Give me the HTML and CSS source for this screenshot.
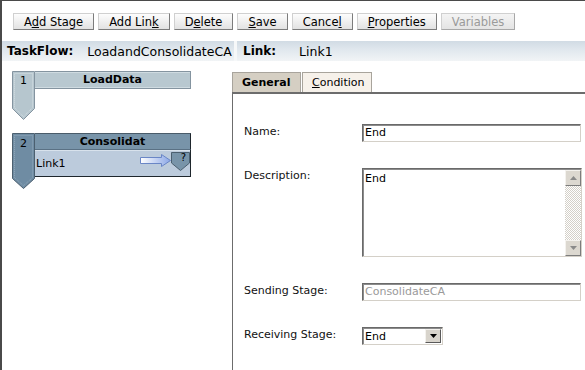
FILE: index.html
```html
<!DOCTYPE html>
<html>
<head>
<meta charset="utf-8">
<link rel="stylesheet" href="styles.css">
</head>
<body>
<div class="frame">
  <div class="toolbar">
    <button class="btn">A<u>d</u>d Stage</button>
    <button class="btn">Add Lin<u>k</u></button>
    <button class="btn">D<u>e</u>lete</button>
    <button class="btn"><u>S</u>ave</button>
    <button class="btn">Cance<u>l</u></button>
    <button class="btn"><u>P</u>roperties</button>
    <button class="btn" disabled>Variables</button>
  </div>

  <div class="infobar">
    <div class="info-cell info-left"><b>TaskFlow:</b><span class="info-val">LoadandConsolidateCA</span></div>
    <div class="info-sep"></div>
    <div class="info-cell info-right"><b>Link:</b><span class="info-val2">Link1</span></div>
  </div>

  <div class="main">
    <div class="canvas">
      <div class="stage stage-light">
        <svg class="stage-num" width="23" height="49" viewBox="0 0 23 49">
          <polygon points="0.5,0.5 22.5,0.5 22.5,37.5 11.5,48.5 0.5,37.5" fill="#b6c6ce" stroke="#8494a0"/>
          <polyline points="2.5,2.5 20.5,2.5 20.5,36.7 11.5,45.7 2.5,36.7 2.5,2.5" fill="none" stroke="#d6e0e5" stroke-dasharray="1 1"/>
          <text x="11.5" y="13" text-anchor="middle" class="num-text">1</text>
        </svg>
        <div class="stage-right">
          <div class="stage-title title-light">LoadData</div>
        </div>
      </div>

      <div class="stage stage-dark">
        <svg class="stage-num" width="23" height="56" viewBox="0 0 23 56">
          <polygon points="0.5,0.5 22.5,0.5 22.5,45.5 11.5,55.5 0.5,45.5" fill="#6f8ca3" stroke="#4b5f6f"/>
          <polyline points="2.5,2.5 20.5,2.5 20.5,44.6 11.5,52.6 2.5,44.6 2.5,2.5" fill="none" stroke="#93a9ba" stroke-dasharray="1 1"/>
          <text x="11.5" y="14" text-anchor="middle" class="num-text">2</text>
        </svg>
        <div class="stage-right">
          <div class="stage-title title-dark">Consolidat</div>
          <div class="stage-link">
            <span class="link-name">Link1</span>
            <svg class="link-arrow" width="31" height="13" viewBox="0 0 31 13">
              <defs>
                <linearGradient id="ag" x1="0" y1="0" x2="1" y2="0">
                  <stop offset="0" stop-color="#ffffff"/>
                  <stop offset="1" stop-color="#8ba7e6"/>
                </linearGradient>
              </defs>
              <polygon points="0.5,3.5 21.5,3.5 21.5,0.5 30.5,6.5 21.5,12.5 21.5,9.5 0.5,9.5" fill="url(#ag)" stroke="#6a86c6"/>
            </svg>
            <svg class="link-target" width="19" height="19" viewBox="0 0 19 19">
              <polygon points="0.5,0.5 18.5,0.5 18.5,11 9.5,18.5 0.5,11" fill="#7894a9" stroke="#4b5f6f"/>
              <text x="12.5" y="9" text-anchor="middle" class="q-text">?</text>
            </svg>
          </div>
        </div>
      </div>
    </div>

    <div class="details">
      <div class="tabs">
        <div class="tab tab-active">General</div>
        <div class="tab"><u>C</u>ondition</div>
      </div>
      <div class="panel">
        <div class="form">
          <div class="label">Name:</div>
          <div class="field"><div class="input">End</div></div>

          <div class="label">Description:</div>
          <div class="field">
            <div class="textarea">
              <div class="ta-text">End</div>
              <div class="scrollbar">
                <div class="sb-btn"><svg width="7" height="4" viewBox="0 0 7 4"><polygon points="3.5,0 7,4 0,4" fill="#8a8a8a"/></svg></div>
                <div class="sb-track"></div>
                <div class="sb-btn"><svg width="7" height="4" viewBox="0 0 7 4"><polygon points="0,0 7,0 3.5,4" fill="#8a8a8a"/></svg></div>
              </div>
            </div>
          </div>

          <div class="label">Sending Stage:</div>
          <div class="field"><div class="input input-disabled">ConsolidateCA</div></div>

          <div class="label">Receiving Stage:</div>
          <div class="field">
            <div class="select">
              <span class="select-text">End</span>
              <span class="select-btn"><svg width="7" height="4" viewBox="0 0 7 4"><polygon points="0,0 7,0 3.5,4" fill="#000"/></svg></span>
            </div>
          </div>
        </div>
      </div>
    </div>
  </div>
</div>
</body>
</html>
```

FILE: styles.css
```css
html, body {
  margin: 0;
  padding: 0;
  background: #fff;
}

body {
  font-family: "DejaVu Sans", Verdana, sans-serif;
  font-size: 11px;
  color: #000;
  width: 585px;
  height: 370px;
  overflow: hidden;
}

.frame {
  height: 370px;
  box-sizing: border-box;
  border-top: 1px solid #4a4a4a;
  border-left: 2px solid #4a4a4a;
  display: flex;
  flex-direction: column;
}

/* toolbar */
.toolbar {
  display: flex;
  gap: 4px;
  padding: 12px 0 0 11px;
}

.btn {
  height: 17px;
  box-sizing: border-box;
  padding: 0 10px;
  margin: 0;
  font-family: "DejaVu Sans", Verdana, sans-serif;
  font-size: 11.5px;
  line-height: 14px;
  color: #000;
  border: 1px solid;
  border-color: #d0d0d0 #7c7c7c #7c7c7c #d0d0d0;
  background: linear-gradient(#fdfdfd, #e2e2e2);
  border-radius: 0;
  white-space: nowrap;
}

.btn u {
  text-underline-offset: 1px;
}

.btn:disabled {
  color: #9a9a9a;
  background: linear-gradient(#f4f4f4, #e4e4e4);
  border-color: #d0d0d0 #a8a8a8 #a8a8a8 #d0d0d0;
}

/* info bar */
.infobar {
  margin-top: 11px;
  height: 20px;
  display: grid;
  grid-template-columns: 232px 3px 1fr;
}

.info-cell {
  display: flex;
  align-items: center;
  font-size: 12.5px;
  background: linear-gradient(#d1dbe4 0%, #e1e8ee 45%, #f1f4f6 100%);
  white-space: nowrap;
}

.info-cell b {
  font-size: 12px;
}

.info-left {
  padding-left: 5px;
}

.info-val {
  margin-left: 14px;
}

.info-sep {
  background: #f6f8f9;
}

.info-right {
  padding-left: 6px;
}

.info-val2 {
  margin-left: 23px;
}

/* main */
.main {
  flex: 1;
  display: grid;
  grid-template-columns: 230px 1fr;
}

.canvas {
  padding: 10px 0 0 10px;
  display: flex;
  flex-direction: column;
  gap: 13px;
}

.stage {
  display: flex;
  align-items: flex-start;
}

.stage-num {
  display: block;
  flex: none;
}

.num-text {
  font-family: "DejaVu Sans", Verdana, sans-serif;
  font-size: 11px;
  fill: #000;
}

.stage-right {
  width: 156px;
  display: flex;
  flex-direction: column;
}

.stage-title {
  font-weight: bold;
  font-size: 11px;
  text-align: center;
  box-sizing: border-box;
}

.title-light {
  height: 18px;
  line-height: 16px;
  background: #b8c8d0;
  border: 1px solid #8494a0;
  border-left: none;
  box-shadow: inset 0 1px 0 #cfdbe1, inset 0 -1px 0 #cfdbe1;
}

.title-dark {
  height: 17px;
  line-height: 15px;
  background: #7894a9;
  border-top: 1px solid #45566384;
  border-top-color: #4a5c6a;
  border-right: 1px solid #1e262c;
  border-bottom: 1px solid #5a7184;
  padding-left: 0;
}

.stage-link {
  height: 27px;
  box-sizing: border-box;
  background: #bccbdc;
  border-right: 1px solid #1e262c;
  border-bottom: 1px solid #1e262c;
  box-shadow: inset 0 1px 0 #d8e2ec;
  display: flex;
  align-items: flex-start;
}

.link-name {
  padding-left: 1px;
  margin-top: 7px;
  line-height: 13px;
}

.link-arrow {
  display: block;
  margin-left: auto;
  margin-top: 4px;
}

.link-target {
  display: block;
  margin-top: 2px;
  margin-right: 0;
}

.q-text {
  font-family: "DejaVu Sans", Verdana, sans-serif;
  font-size: 10px;
  fill: #000;
}

/* details */
.details {
  padding-top: 11px;
  display: flex;
  flex-direction: column;
}

.tabs {
  display: flex;
  gap: 1px;
  height: 20px;
}

.tab {
  box-sizing: border-box;
  height: 20px;
  border: 1px solid #a8a49c;
  border-bottom: none;
  background: #f6f1ea;
  line-height: 19px;
  font-size: 11px;
  padding: 0 9px;
  width: 70px;
  white-space: nowrap;
}

.tab-active {
  width: 69px;
  background: #d5cfc3;
  font-weight: bold;
  padding-left: 9px;
}

.panel {
  flex: 1;
  border-top: 2px solid #6c6c6c;
  border-left: 1px solid #6c6c6c;
  padding: 30px 0 0 11px;
}

.form {
  display: grid;
  grid-template-columns: 118px 220px;
  row-gap: 26px;
  align-items: start;
}

.label {
  font-size: 11px;
  line-height: 13px;
  padding-top: 1px;
  color: #111;
  white-space: nowrap;
}

.field {
  display: flex;
}

.input {
  width: 219px;
  height: 18px;
  box-sizing: border-box;
  border: 1px solid;
  border-color: #6a6a6a #d4d0c8 #d4d0c8 #6a6a6a;
  box-shadow: inset 1px 1px 0 #8c8c8c;
  background: #fff;
  padding: 1px 0 0 2px;
  line-height: 14px;
  font-size: 11px;
}

.input-disabled {
  color: #9a9a9a;
}

.textarea {
  width: 220px;
  height: 89px;
  box-sizing: border-box;
  border: 1px solid;
  border-color: #6a6a6a #d4d0c8 #d4d0c8 #6a6a6a;
  box-shadow: inset 1px 1px 0 #8c8c8c;
  background: #fff;
  display: flex;
}

.ta-text {
  flex: 1;
  padding: 3px 0 0 2px;
  font-size: 11px;
  line-height: 13px;
}

.scrollbar {
  width: 16px;
  padding-top: 1px;
  display: flex;
  flex-direction: column;
}

.sb-btn {
  height: 16px;
  box-sizing: border-box;
  background: #dcd8d0;
  border: 1px solid;
  border-color: #f4f2ee #7c7c7c #7c7c7c #f4f2ee;
  display: flex;
  align-items: center;
  justify-content: center;
}

.sb-btn svg {
  display: block;
}

.sb-track {
  flex: 1;
  background: repeating-conic-gradient(#d4d0c8 0 25%, #ffffff 0 50%) 0 0 / 2px 2px;
}

.select {
  width: 81px;
  height: 18px;
  box-sizing: border-box;
  border: 1px solid;
  border-color: #6a6a6a #d4d0c8 #d4d0c8 #6a6a6a;
  box-shadow: inset 1px 1px 0 #8c8c8c;
  background: #fff;
  display: flex;
  align-items: stretch;
  padding: 1px 1px 1px 0;
}

.select-text {
  flex: 1;
  padding-left: 2px;
  font-size: 11px;
  line-height: 15px;
}

.select-btn {
  width: 16px;
  box-sizing: border-box;
  background: #d8d4cc;
  border: 1px solid;
  border-color: #f4f2ee #5a5a5a #5a5a5a #f4f2ee;
  display: flex;
  align-items: center;
  justify-content: center;
}

.select-btn svg {
  display: block;
}
```
